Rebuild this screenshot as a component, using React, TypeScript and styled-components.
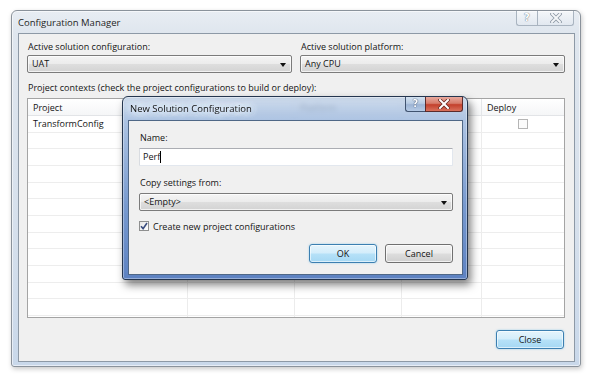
import React from 'react';
import styled, { createGlobalStyle, css } from 'styled-components';

const GlobalStyle = createGlobalStyle`
  html, body { margin: 0; padding: 0; background: #ffffff; }
  body {
    font-family: "Open Sans", "Noto Sans", sans-serif;
    font-size: 9px;
    color: #141414;
  }
  * { box-sizing: border-box; }
`;

const Desktop = styled.div`
  position: relative;
  width: 590px;
  height: 375px;
  padding: 10px 0 0 11px;
  overflow: hidden;
`;

/* ---------- Outer window ---------- */
const Window = styled.div`
  width: 570px;
  height: 357px;
  border: 1px solid #8a929b;
  border-radius: 6px 6px 3px 3px;
  background: linear-gradient(to bottom, #e8edf3 0px, #dfe6ee 22px, #d6e0ec 60%, #c9d8ea 100%);
  box-shadow: inset 0 0 0 1px rgba(255, 255, 255, 0.55), 1px 2px 5px rgba(0, 0, 0, 0.22);
  display: flex;
  flex-direction: column;
  padding: 0 5px 4px 6px;
`;

const TitleBar = styled.div`
  height: 22px;
  display: flex;
  align-items: flex-start;
  justify-content: space-between;
`;

const WindowTitle = styled.div`
  font-size: 9.5px;
  line-height: 14px;
  padding-top: 5px;
  color: #1e1e1e;
`;

const CaptionGroup = styled.div`
  display: flex;
  margin-right: 1px;
`;

const CaptionButton = styled.div<{ $w: number; $inactive?: boolean; $close?: boolean }>`
  width: ${(p) => p.$w}px;
  height: 15px;
  display: flex;
  align-items: center;
  justify-content: center;
  ${(p) =>
    p.$inactive
      ? css`
          border: 1px solid #a9b4c0;
          border-top: none;
          background: linear-gradient(to bottom, rgba(255, 255, 255, 0.55), rgba(225, 232, 240, 0.6));
          color: #7f8b98;
          &:first-child { border-radius: 0 0 0 3px; border-right: none; }
          &:last-child { border-radius: 0 0 3px 0; }
        `
      : p.$close
      ? css`
          border: 1px solid #5b2b2b;
          border-top: none;
          border-radius: 0 0 3px 0;
          background: linear-gradient(to bottom, #e9a99d 0%, #d67c6b 45%, #c3402c 55%, #d9715c 100%);
          color: #fff;
        `
      : css`
          border: 1px solid #40536f;
          border-top: none;
          border-right: none;
          border-radius: 0 0 0 3px;
          background: linear-gradient(to bottom, #d4e1ef 0%, #b7cbe3 45%, #9db4d4 55%, #b6cbe6 100%);
          color: #fff;
        `}
`;

const HelpGlyph = styled.span<{ $light?: boolean }>`
  font-family: "DejaVu Sans", sans-serif;
  font-weight: bold;
  font-size: 10px;
  line-height: 10px;
  color: #ffffff;
  ${(p) =>
    p.$light
      ? css`
          text-shadow: 0 0 1px #2d4467, 0 0 1px #2d4467;
        `
      : css`
          text-shadow: 0 0 1px #6f7c8b, 0 0 1px #6f7c8b;
        `}
`;

const Client = styled.div`
  flex: 1;
  border: 1px solid #8d99a6;
  background: #f0f0f0;
  padding: 6px 9px 12px 8px;
  display: flex;
  flex-direction: column;
`;

const TopRow = styled.div`
  display: grid;
  grid-template-columns: 265px 265px;
  column-gap: 8px;
`;

const Field = styled.div`
  display: flex;
  flex-direction: column;
`;

const Label = styled.div<{ $gap?: number }>`
  line-height: 13px;
  padding-left: 1px;
  margin-bottom: ${(p) => p.$gap ?? 2}px;
  white-space: nowrap;
`;

const Combo = styled.div`
  position: relative;
  height: 18px;
  border: 1px solid #7b7b7b;
  border-radius: 2px;
  background: linear-gradient(to bottom, #f4f4f4 0%, #ececec 48%, #dedede 52%, #d3d3d3 100%);
  box-shadow: inset 0 0 0 1px rgba(255, 255, 255, 0.7);
  padding-left: 4px;
  display: flex;
  align-items: center;
  line-height: 14px;
`;

const ComboArrow = styled.span`
  position: absolute;
  right: 5px;
  top: 7px;
  width: 0;
  height: 0;
  border-left: 3px solid transparent;
  border-right: 3px solid transparent;
  border-top: 4px solid #111;
`;

const Spacer = styled.div<{ $h: number }>`
  height: ${(p) => p.$h}px;
  flex: none;
`;

/* ---------- Grid ---------- */
const GridBox = styled.div`
  height: 220px;
  border: 1px solid #a4a4a4;
  background: #ffffff;
  overflow: hidden;
  flex: none;
`;

const GridRow = styled.div<{ $header?: boolean }>`
  display: grid;
  grid-template-columns: 160px 107px 107px 80px 82px;
  height: ${(p) => (p.$header ? '17px' : 'calc(50px / 3)')};
  border-bottom: 1px solid ${(p) => (p.$header ? '#e2e4e7' : '#ededed')};
  background: ${(p) => (p.$header ? 'linear-gradient(to bottom, #ffffff, #f5f6f7)' : '#ffffff')};
`;

const Cell = styled.div<{ $center?: boolean }>`
  border-right: 1px solid #ececec;
  padding-left: 5px;
  display: flex;
  align-items: center;
  justify-content: ${(p) => (p.$center ? 'center' : 'flex-start')};
  white-space: nowrap;
  overflow: hidden;
  &:last-child { border-right: none; }
`;

const HeaderCell = styled(Cell)`
  border-right: 1px solid #e4e6e9;
`;

const GridCheck = styled.span`
  width: 10px;
  height: 10px;
  border: 1px solid #b5b5b5;
  background: #fbfbfb;
  margin-left: -5px;
`;

const Footer = styled.div`
  margin-top: 12px;
  display: flex;
  justify-content: flex-end;
  padding-right: 1px;
`;

const PushButton = styled.div<{ $default?: boolean }>`
  width: 68px;
  height: 19px;
  border-radius: 3px;
  display: flex;
  align-items: center;
  justify-content: center;
  line-height: 14px;
  ${(p) =>
    p.$default
      ? css`
          border: 1px solid #3c7fb1;
          background: linear-gradient(to bottom, #e5f4fc 0%, #d3edfb 48%, #b6e1f8 52%, #a5d8f4 100%);
          box-shadow: inset 0 0 0 1px rgba(255, 255, 255, 0.6), 0 0 2px rgba(80, 180, 230, 0.6);
        `
      : css`
          border: 1px solid #707070;
          background: linear-gradient(to bottom, #f2f2f2 0%, #ebebeb 48%, #dddddd 52%, #cfcfcf 100%);
          box-shadow: inset 0 0 0 1px rgba(255, 255, 255, 0.7);
        `}
`;

/* ---------- Dialog ---------- */
const Dialog = styled.div`
  position: absolute;
  left: 122px;
  top: 96px;
  width: 346px;
  height: 184px;
  border: 1px solid #25364f;
  border-radius: 6px 6px 3px 3px;
  background: linear-gradient(
    to bottom,
    rgba(196, 212, 232, 0.82) 0px,
    rgba(160, 186, 222, 0.86) 23px,
    rgba(112, 148, 204, 0.95) 60%,
    rgba(88, 126, 192, 0.97) 100%
  );
  backdrop-filter: blur(2.5px);
  box-shadow: inset 0 0 0 1px rgba(255, 255, 255, 0.35), 3px 5px 8px rgba(0, 0, 0, 0.5);
  display: flex;
  flex-direction: column;
  padding: 0 4px 4px 5px;
`;

const DialogTitleBar = styled.div`
  height: 23px;
  display: flex;
  align-items: flex-start;
  justify-content: space-between;
`;

const DialogTitle = styled.div`
  font-size: 9.5px;
  line-height: 14px;
  padding-top: 5px;
  padding-left: 2px;
  color: #111;
  text-shadow: 0 0 6px #e6eef8, 0 0 6px #e6eef8, 0 0 10px #e6eef8, 0 0 10px #e6eef8;
`;

const DialogCaption = styled.div`
  display: flex;
`;

const DialogClient = styled.div`
  flex: 1;
  border: 1px solid #4f6786;
  background: #f0f0f0;
  padding: 10px 9px 11px 10px;
  display: flex;
  flex-direction: column;
`;

const TextInput = styled.div`
  height: 18px;
  border: 1px solid #e2e7ee;
  border-top-color: #abadb3;
  border-left-color: #d9dce1;
  background: #ffffff;
  padding-left: 3px;
  display: flex;
  align-items: center;
  line-height: 14px;
  border-radius: 1px;
`;

const Caret = styled.span`
  display: inline-block;
  width: 1px;
  height: 12px;
  background: #000;
`;

const CheckRow = styled.div`
  height: 14px;
  display: flex;
  align-items: center;
  gap: 4px;
  line-height: 13px;
`;

const CheckBox = styled.span`
  width: 10px;
  height: 10px;
  border: 1px solid #8e8f8f;
  background: linear-gradient(135deg, #e6e6e6, #ffffff);
  display: flex;
  align-items: center;
  justify-content: center;
`;

const ButtonRow = styled.div`
  margin-top: 11px;
  display: flex;
  justify-content: flex-end;
  gap: 8px;
`;

const CloseX: React.FC<{ color: string; outline: string }> = ({ color, outline }) => (
  <svg width="12" height="10" viewBox="0 0 12 10">
    <path d="M2 1 L10 9 M10 1 L2 9" stroke={outline} strokeWidth="3.6" strokeLinecap="square" />
    <path d="M2 1 L10 9 M10 1 L2 9" stroke={color} strokeWidth="2" strokeLinecap="square" />
  </svg>
);

const rows = Array.from({ length: 12 }, (_, i) => i);

export default function App() {
  return (
    <>
      <GlobalStyle />
      <Desktop>
        <Window>
          <TitleBar>
            <WindowTitle>Configuration Manager</WindowTitle>
            <CaptionGroup>
              <CaptionButton $w={21} $inactive>
                <HelpGlyph>?</HelpGlyph>
              </CaptionButton>
              <CaptionButton $w={37} $inactive>
                <CloseX color="#f4f6f8" outline="#8c97a4" />
              </CaptionButton>
            </CaptionGroup>
          </TitleBar>
          <Client>
            <TopRow>
              <Field>
                <Label>Active solution configuration:</Label>
                <Combo>
                  UAT
                  <ComboArrow />
                </Combo>
              </Field>
              <Field>
                <Label>Active solution platform:</Label>
                <Combo>
                  Any CPU
                  <ComboArrow />
                </Combo>
              </Field>
            </TopRow>
            <Spacer $h={8} />
            <Label $gap={4}>Project contexts (check the project configurations to build or deploy):</Label>
            <GridBox>
              <GridRow $header>
                <HeaderCell>Project</HeaderCell>
                <HeaderCell />
                <HeaderCell>Platform</HeaderCell>
                <HeaderCell />
                <HeaderCell>Deploy</HeaderCell>
              </GridRow>
              <GridRow>
                <Cell>TransformConfig</Cell>
                <Cell />
                <Cell />
                <Cell $center />
                <Cell $center>
                  <GridCheck />
                </Cell>
              </GridRow>
              {rows.map((r) => (
                <GridRow key={r}>
                  <Cell />
                  <Cell />
                  <Cell />
                  <Cell />
                  <Cell />
                </GridRow>
              ))}
            </GridBox>
            <Footer>
              <PushButton $default>Close</PushButton>
            </Footer>
          </Client>
        </Window>

        <Dialog>
          <DialogTitleBar>
            <DialogTitle>New Solution Configuration</DialogTitle>
            <DialogCaption>
              <CaptionButton $w={20}>
                <HelpGlyph $light>?</HelpGlyph>
              </CaptionButton>
              <CaptionButton $w={38} $close>
                <CloseX color="#ffffff" outline="#6b2a22" />
              </CaptionButton>
            </DialogCaption>
          </DialogTitleBar>
          <DialogClient>
            <Label $gap={4}>Name:</Label>
            <TextInput>
              Perf
              <Caret />
            </TextInput>
            <Spacer $h={10} />
            <Label $gap={4}>Copy settings from:</Label>
            <Combo>
              &lt;Empty&gt;
              <ComboArrow />
            </Combo>
            <Spacer $h={8} />
            <CheckRow>
              <CheckBox>
                <svg width="8" height="8" viewBox="0 0 8 8">
                  <path d="M1 4.2 L3.1 6.6 L7 1" stroke="#3a4d7f" strokeWidth="1.6" fill="none" />
                </svg>
              </CheckBox>
              Create new project configurations
            </CheckRow>
            <ButtonRow>
              <PushButton $default>OK</PushButton>
              <PushButton>Cancel</PushButton>
            </ButtonRow>
          </DialogClient>
        </Dialog>
      </Desktop>
    </>
  );
}
